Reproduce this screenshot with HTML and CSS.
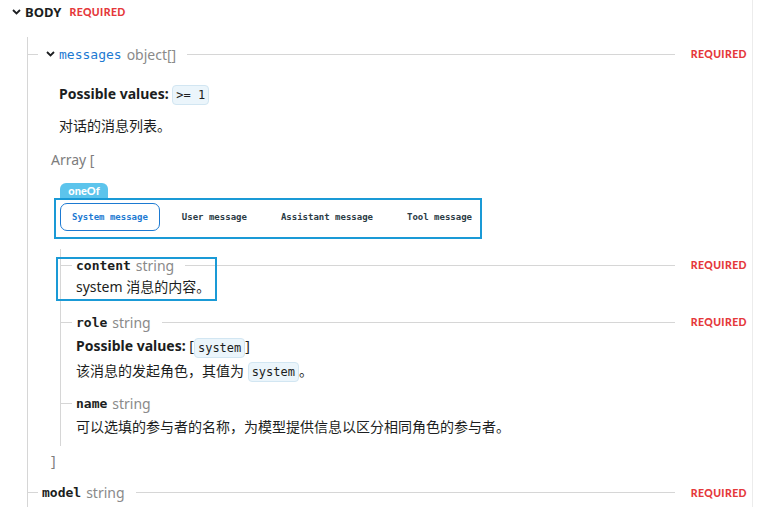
FILE: index.html
```html
<!DOCTYPE html>
<html lang="en">
<head>
  <meta charset="UTF-8">
  <meta name="viewport" content="width=device-width, initial-scale=1.0">
  <title>Request body</title>
  <link rel="stylesheet" href="styles.css">
</head>
<body>
  <div class="page">
    <div class="body-head">
      <svg class="chev" width="9" height="6" viewBox="0 0 9 6"><path d="M1 1l3.5 3.5L8 1" fill="none" stroke="#1c1e21" stroke-width="1.8"/></svg>
      <span class="body-title">BODY</span>
      <span class="req">REQUIRED</span>
    </div>

    <div class="tree">
      <!-- messages -->
      <div class="prop">
        <div class="prop-row">
          <span class="conn"></span>
          <svg class="chev chev-prop" width="9" height="6" viewBox="0 0 9 6"><path d="M1 1l3.5 3.5L8 1" fill="none" stroke="#1c1e21" stroke-width="1.8"/></svg>
          <code class="name link">messages</code>
          <span class="type">object[]</span>
          <span class="rule"></span>
          <span class="req">REQUIRED</span>
        </div>
        <div class="prop-body">
          <p class="line first"><b>Possible values:</b> <code class="chip">&gt;= 1</code></p>
          <p class="line desc">对话的消息列表。</p>
          <div class="array">Array [</div>

          <span class="badge">oneOf</span>
          <div class="tabs">
            <span class="tab active">System message</span>
            <span class="tab">User message</span>
            <span class="tab">Assistant message</span>
            <span class="tab">Tool message</span>
          </div>

          <div class="subtree">
            <div class="sub-prop marked">
              <div class="prop-row">
                <span class="conn sub"></span>
                <code class="name">content</code>
                <span class="type">string</span>
                <span class="rule"></span>
                <span class="req">REQUIRED</span>
              </div>
              <p class="line text">system 消息的内容。</p>
              <span class="mark"></span>
            </div>

            <div class="sub-prop role">
              <div class="prop-row">
                <span class="conn sub"></span>
                <code class="name">role</code>
                <span class="type">string</span>
                <span class="rule"></span>
                <span class="req">REQUIRED</span>
              </div>
              <p class="line text pv"><b>Possible values:</b> [<code class="chip">system</code>]</p>
              <p class="line text">该消息的发起角色，其值为 <code class="chip">system</code>。</p>
            </div>

            <div class="sub-prop name-prop">
              <div class="prop-row">
                <span class="conn sub"></span>
                <code class="name">name</code>
                <span class="type">string</span>
              </div>
              <p class="line text">可以选填的参与者的名称，为模型提供信息以区分相同角色的参与者。</p>
            </div>
          </div>

          <div class="array array-end">]</div>
        </div>
      </div>

      <!-- model -->
      <div class="prop model">
        <div class="prop-row">
          <span class="conn"></span>
          <code class="name">model</code>
          <span class="type">string</span>
          <span class="rule"></span>
          <span class="req">REQUIRED</span>
        </div>
      </div>
    </div>
  </div>
</body>
</html>
```

FILE: styles.css
```css
*{
  margin: 0;
  padding: 0;
  box-sizing: border-box;
}
body{
  font-family: "Noto Sans", "Noto Sans CJK SC", sans-serif;
  font-size: 14px;
  color: #1c1e21;
  background: #fff;
}
code{
  font-family: "DejaVu Sans Mono", "Liberation Mono", monospace;
}
.page{
  width: 753px;
  height: 507px;
  overflow: hidden;
  border-right: 1px solid #ececec;
  padding-right: 5px;
}

/* header */
.body-head{
  height: 24px;
  display: flex;
  align-items: center;
  padding-left: 12px;
}
.chev{
  display: block;
  flex: none;
}
.body-title{
  font-weight: 700;
  font-size: 13px;
  margin-left: 4px;
}
.req{
  font-family: Lato, "Noto Sans", sans-serif;
  font-weight: 900;
  font-size: 10.5px;
  letter-spacing: 0.4px;
  color: #e5383b;
}
.body-head .req{
  margin-left: 8px;
}

/* tree */
.tree{
  margin-top: 13px;
  margin-left: 27px;
  border-left: 1px solid #d6d6d6;
  padding: 8px 0 40px;
}
.prop-row{
  height: 18px;
  display: flex;
  align-items: center;
  white-space: nowrap;
}
.conn{
  width: 10px;
  height: 1px;
  background: #d6d6d6;
  flex: none;
}
.conn.sub{
  width: 11px;
  margin-right: 4px;
}
.chev-prop{
  margin: 0 4px 0 8px;
}
.name{
  font-size: 13px;
  font-weight: 700;
}
.name.link{
  color: #1d7ad2;
  font-weight: 400;
}
.type{
  color: #8a8a8a;
  margin-left: 5px;
}
.rule{
  flex: 1;
  height: 1px;
  background: #d6d6d6;
  margin: 0 16px 0 11px;
}

.prop-body{
  padding-left: 23px;
}
.line{
  line-height: 22px;
}
.prop-body > .line{
  padding-left: 8px;
}
.line.first{
  margin-top: 20px;
}
.line.desc{
  margin-top: 10px;
}
.chip{
  display: inline-block;
  font-size: 12px;
  line-height: 18px;
  padding: 0 3px;
  background: #ebf5fb;
  border: 1px solid #d2e6f2;
  border-radius: 4px;
  vertical-align: middle;
}
.array{
  color: #7d7d7d;
  line-height: 22px;
  margin-top: 12px;
}

/* oneOf */
.badge{
  display: block;
  width: 48px;
  height: 17px;
  margin: 12px 0 0 9px;
  background: #5cc4ec;
  color: #fff;
  font-family: Lato, "Noto Sans", sans-serif;
  font-weight: 900;
  font-size: 11px;
  line-height: 16px;
  text-align: center;
  border-radius: 6px 6px 0 0;
}
.tabs{
  width: 428px;
  height: 41px;
  margin: -2px 0 0 3px;
  border: 2px solid #1a9ad6;
  padding: 3px 4px 0 4px;
  display: flex;
  gap: 10px;
}
.tab{
  height: 28px;
  display: flex;
  align-items: center;
  padding: 0 11px;
  font-family: "DejaVu Sans Mono", "Liberation Mono", monospace;
  font-size: 9px;
  font-weight: 700;
  color: #2b3b45;
  white-space: nowrap;
  border: 1px solid transparent;
  border-radius: 7px;
}
.tab.active{
  color: #1d7ad2;
  border-color: #1d7ad2;
}

/* nested */
.subtree{
  margin: 10px 0 0 9px;
  border-left: 1px solid #d6d6d6;
  padding: 7px 0 8px;
}
.sub-prop{
  position: relative;
}
.sub-prop .text{
  padding-left: 15px;
}
.marked .text{
  margin-top: 2px;
}
.mark{
  position: absolute;
  left: -5px;
  top: 1px;
  width: 161px;
  height: 44px;
  border: 2px solid #1a9ad6;
}
.role{
  margin-top: 15px;
}
.role .pv{
  margin-top: 4px;
}
.role .pv + .text{
  margin-top: 2px;
}
.name-prop{
  margin-top: 13px;
}
.name-prop .text{
  margin-top: 3px;
}
.array-end{
  margin-top: 4px;
}

.model > .prop-row{
  margin-top: 12px;
}
.model .conn{
  margin-right: 4px;
}
```
